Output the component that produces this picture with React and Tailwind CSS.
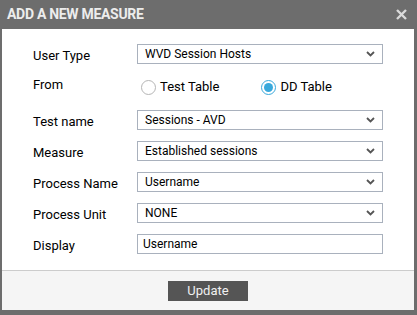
const Chevron = () => (
  <svg width="9" height="6" viewBox="0 0 9 6" className="shrink-0">
    <polyline points="1,1 4.5,4.5 8,1" fill="none" stroke="#555" strokeWidth="1.8" />
  </svg>
);

const Select = ({ value }) => (
  <div className="h-[20px] w-[246px] border border-[#a9b1bd] bg-white flex items-center justify-between pl-[7px] pr-[7px] text-[12px] text-black">
    <span>{value}</span>
    <Chevron />
  </div>
);

const Radio = ({ checked, label }) => (
  <div className="flex items-center gap-[4px]">
    {checked ? (
      <span className="w-[15px] h-[15px] rounded-full border border-[#39a9dc] flex items-center justify-center">
        <span className="w-[9px] h-[9px] rounded-full bg-[#39a9dc]" />
      </span>
    ) : (
      <span className="w-[15px] h-[15px] rounded-full border border-[#b5b5b5] bg-white" />
    )}
    <span className="text-[13px] text-black">{label}</span>
  </div>
);

const Label = ({ children }) => (
  <div className="pl-[31px] h-[20px] leading-[20px] translate-y-[2px] text-[13px] text-black">{children}</div>
);

const App = () => {
  const selects = [
    { label: 'Test name', value: 'Sessions - AVD' },
    { label: 'Measure', value: 'Established sessions' },
    { label: 'Process Name', value: 'Username' },
    { label: 'Process Unit', value: 'NONE' },
  ];

  return (
    <div className="w-[417px] h-[315px] bg-[#6d6d6d] flex flex-col" style={{ fontFamily: 'Roboto, "Liberation Sans", sans-serif' }}>
      {/* Title bar */}
      <div className="h-[29px] shrink-0 flex items-center justify-between pl-[7px] pr-[10px]">
        <span className="text-[14px] font-bold text-[#ececec] tracking-[-0.3px]">ADD A NEW MEASURE</span>
        <svg width="11" height="11" viewBox="0 0 11 11">
          <path d="M1 1 L10 10 M10 1 L1 10" stroke="#d9d9d9" strokeWidth="2.4" />
        </svg>
      </div>

      {/* Body */}
      <div className="ml-[2px] mr-[3px] flex-1 bg-white flex flex-col">
        <div className="flex-1 pt-[15px] grid grid-cols-[135px_246px] gap-y-[11px] content-start items-center">
          <Label>User Type</Label>
          <Select value="WVD Session Hosts" />

          <div className="pl-[31px] h-[24px] leading-[24px] -translate-y-[2px] text-[13px] text-black">From</div>
          <div className="h-[24px] flex items-center gap-[42px] pl-[4px]">
            <Radio label="Test Table" />
            <Radio checked label="DD Table" />
          </div>

          {selects.map((s) => (
            <div key={s.label} className="contents">
              <Label>{s.label}</Label>
              <Select value={s.value} />
            </div>
          ))}

          <Label>Display</Label>
          <div className="h-[20px] w-[246px] border border-[#a9b1bd] bg-white flex items-center pl-[5px] text-[12px] text-black">
            Username
          </div>
        </div>

        {/* Footer */}
        <div className="h-[40px] shrink-0 border-t border-[#cccccc] bg-[#f5f5f5] flex items-center justify-center">
          <button className="w-[80px] h-[20px] bg-[#555555] text-[#f0f0f0] text-[13px] leading-none">Update</button>
        </div>
      </div>
      <div className="h-[5px] shrink-0" />
    </div>
  );
};

export default App;
